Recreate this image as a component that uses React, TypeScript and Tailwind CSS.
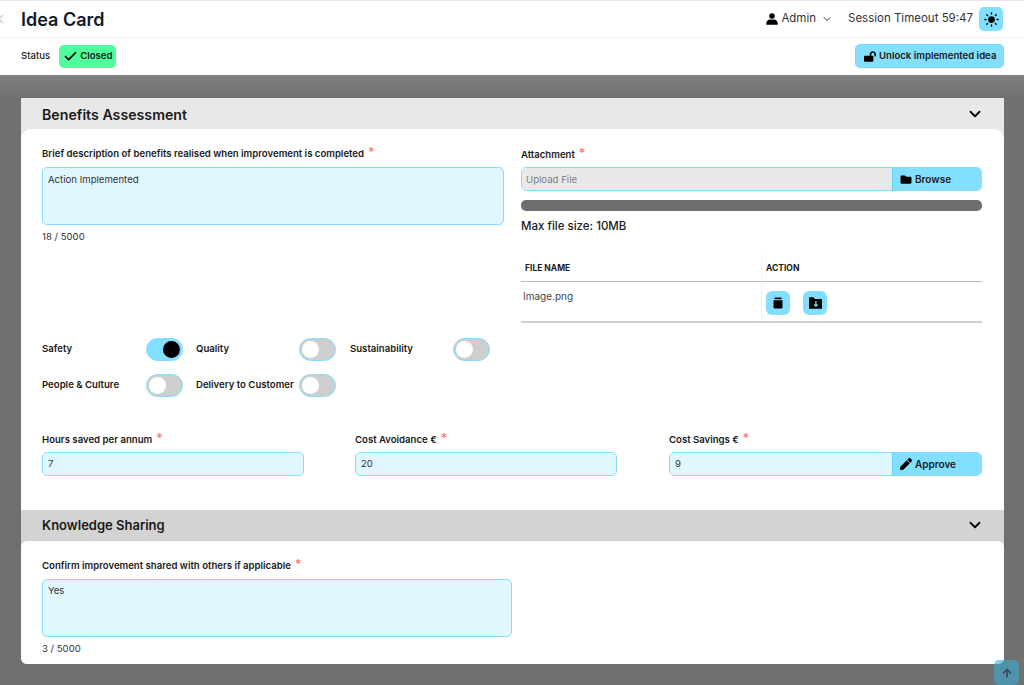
import React from "react";
import { FaFolder, FaPen, FaLockOpen, FaArrowUp } from "react-icons/fa";
import { LuChevronDown, LuX, LuCheck } from "react-icons/lu";

const Req = () => <span className="ml-[4px] text-[#ff7a66] text-[12px] relative -top-[2px]">*</span>;

function Label({ children, cls = "" }: { children: React.ReactNode; cls?: string }) {
  return <div className={"flex items-center h-4 text-[9.6px] font-semibold text-[#1a1a1a] " + cls}>{children}<Req /></div>;
}

function Toggle({ on = false }: { on?: boolean }) {
  return (
    <div className={"w-[37px] h-[23px] rounded-full border border-[#82dfff] flex items-center px-[2px] shrink-0 " + (on ? "bg-[#82dfff] justify-end" : "bg-[#cdcfcf] justify-start")}>
      <div className={"w-[17px] h-[17px] rounded-full " + (on ? "bg-black" : "bg-white")} />
    </div>
  );
}

function ToggleItem({ label, on, w }: { label: string; on?: boolean; w: string }) {
  return (
    <div className={"flex items-center justify-between " + w}>
      <span className="text-[9.6px] font-semibold text-[#1a1a1a]">{label}</span>
      <Toggle on={on} />
    </div>
  );
}

function SectionHead({ title, bg, size }: { title: string; bg: string; size: string }) {
  return (
    <div className={"flex items-center justify-between pl-[21px] pr-[20px] " + bg}>
      <span className={size + " font-semibold text-[#1a1a1a]"}>{title}</span>
      <LuChevronDown className="w-[18px] h-[18px] text-black -mt-[1px]" strokeWidth={2.4} />
    </div>
  );
}

function SunIcon() {
  return (
    <svg viewBox="0 0 16 16" className="w-[15px] h-[15px]" fill="black" stroke="black">
      <circle cx="8" cy="8" r="3.6" stroke="none" />
      <g strokeWidth="1.5" strokeLinecap="round">
        <path d="M8 .9v1.2M8 13.9v1.2M.9 8h1.2M13.9 8h1.2M3 3l.8.8M12.2 12.2l.8.8M3 13l.8-.8M12.2 3.8l.8-.8" />
      </g>
    </svg>
  );
}

function UserIcon() {
  return (
    <svg viewBox="0 0 12 12" className="w-[12px] h-[12px]" fill="black">
      <circle cx="6" cy="3" r="2.8" />
      <path d="M.2 11.2C.2 8.4 2 6.6 3.8 6.6h4.4c1.800 0 3.600 1.800 3.600 4.600 0 .4-.3.6-.6.6H.8c-.3 0-.6-.2-.6-.6z" />
    </svg>
  );
}

function TrashIcon() {
  return (
    <svg viewBox="0 0 12 14" className="w-[10px] h-[12px]" fill="black">
      <rect x="1.5" y="0.4" width="9" height="2" rx="1" />
      <path d="M.6 3.6h10.8v8.4c0 1-.8 1.7-1.8 1.7H2.400c-1 0-1.800-.7-1.800-1.700z" />
    </svg>
  );
}

function FolderDown() {
  return (
    <svg viewBox="0 0 16 14" className="w-[13px] h-[12px]">
      <path fill="black" d="M0 1.2C0 .5.5 0 1.2 0h4.3l1.7 2h7.6c.7 0 1.2.5 1.2 1.2v9.6c0 .7-.5 1.2-1.2 1.2H1.2C.5 14 0 13.500 0 12.800z" />
      <path stroke="#82dfff" strokeWidth="1.5" fill="none" d="M8.500 4.500v6.500M6.300 8.800l2.200 2.200 2.200-2.200" />
    </svg>
  );
}

const textBox = "bg-[#e0f7ff] border border-[#82dfff] rounded-[5px] text-[9.6px] text-[#333] px-[5px]";

export default function App() {
  return (
    <div className="relative w-[1024px] h-[685px] overflow-hidden flex flex-col bg-[#707070] font-['Inter',sans-serif]">
      <header className="h-[38px] shrink-0 bg-white border-t border-t-[#e8e8e8] border-b border-b-[#f2f2f2] flex items-center">
        <LuX className="w-[14px] h-[14px] text-[#c4c4c4] -ml-[8px] shrink-0" />
        <h1 className="ml-[15px] text-[18px] font-semibold text-[#111827]">Idea Card</h1>
        <div className="ml-auto flex items-center pr-[21px]">
          <UserIcon />
          <span className="ml-[3px] text-[11.5px] text-[#333]">Admin</span>
          <LuChevronDown className="ml-[5px] w-[12px] h-[12px] text-[#333]" />
          <span className="ml-[15px] text-[11.5px] text-[#333]">Session Timeout 59:47</span>
          <div className="ml-[6px] w-[24px] h-[24px] rounded-[5px] bg-[#82dfff] flex items-center justify-center">
            <SunIcon />
          </div>
        </div>
      </header>
      <div className="h-[37px] shrink-0 bg-white flex items-center pl-[21px] pr-[20px] pb-[1px]">
        <span className="text-[9.6px] font-medium text-[#1a1a1a]">Status</span>
        <div className="ml-[9px] h-[23px] w-[57px] rounded-[5px] bg-[#4fff9c] flex items-center pl-[4px] gap-[2px]">
          <LuCheck className="w-[15px] h-[15px] text-black shrink-0" strokeWidth={2.8} />
          <span className="text-[9.6px] font-semibold text-[#1a1a1a]">Closed</span>
        </div>
        <div className="ml-auto h-[24px] w-[149px] rounded-[5px] bg-[#82dfff] border border-[#6fd8fb] flex items-center pl-[8px] gap-[3px]">
          <FaLockOpen className="w-[12px] h-[11px] text-black shrink-0" />
          <span className="text-[9.6px] font-semibold text-[#1a1a1a] whitespace-nowrap">Unlock implemented idea</span>
        </div>
      </div>
      <main className="flex-1 bg-gradient-to-b from-[#808080] to-[#707070] bg-[length:100%_24px] bg-no-repeat pt-[23px] pl-[21px] pr-[20px]">
        <SectionHead title="Benefits Assessment" size="text-[14.2px] pt-[1px]" bg="bg-[#e8e8e8] h-[32px]" />
        <section className="-mt-[1px] bg-[#e8e8e8]">
          <div className="bg-white rounded-t-[10px] h-[381px] px-[21px] pt-[17px] flex flex-col">
            <div className="flex h-[189px]">
              <div className="w-[462px] shrink-0">
                <Label>Brief description of benefits realised when improvement is completed</Label>
                <div className={textBox + " mt-[5px] h-[58px] pt-[5px]"}>Action Implemented</div>
                <div className="mt-[5px] text-[9.6px] text-[#333]">18 / 5000</div>
              </div>
              <div className="ml-[17px] w-[461px] shrink-0 pt-[1px]">
                <Label>Attachment</Label>
                <div className="mt-[4px] flex h-[24px] rounded-[5px] border border-[#82dfff] overflow-hidden">
                  <div className="flex-1 bg-[#e8e8e8] text-[9.6px] text-[#808080] flex items-center pl-[4px] pt-[2px]">Upload File</div>
                  <div className="w-[89px] bg-[#82dfff] border-l border-[#5fd3fa] flex items-center pl-[7px] gap-[3px]">
                    <FaFolder className="w-[12px] h-[11px] text-black" />
                    <span className="text-[10px] font-semibold text-[#1a1a1a]">Browse</span>
                  </div>
                </div>
                <div className="mt-[9px] h-[11px] rounded-[5px] bg-[#6e6e6e]" />
                <div className="mt-[8px] text-[11.5px] leading-[15px] font-medium text-[#1a1a1a]">Max file size: 10MB</div>
                <div className="mt-[20px] grid grid-cols-[241px_1fr] border-b-2 border-[#d0d0d0]">
                  <div className="h-[28px] pt-[1px] border-b border-[#bbb] border-r border-r-[#f0f0f0] flex items-center pl-[4px] text-[8.5px] font-bold text-[#1a1a1a]">FILE NAME</div>
                  <div className="h-[28px] pt-[1px] border-b border-[#bbb] flex items-center pl-[4px] text-[8.5px] font-bold text-[#1a1a1a]">ACTION</div>
                  <div className="h-[39px] border-r border-r-[#f0f0f0] pt-[7px] pl-[2px] text-[10px] text-[#444]">Image.png</div>
                  <div className="h-[39px] pt-[9px] pl-[4px] flex gap-[13px]">
                    <div className="w-[24px] h-[24px] rounded-[6px] bg-[#82dfff] flex items-center justify-center"><TrashIcon /></div>
                    <div className="w-[24px] h-[24px] rounded-[6px] bg-[#82dfff] flex items-center justify-center"><FolderDown /></div>
                  </div>
                </div>
              </div>
            </div>
            <div className="mt-[3px] flex gap-[13px]">
              <ToggleItem label="Safety" on w="w-[141px]" />
              <ToggleItem label="Quality" w="w-[140px]" />
              <ToggleItem label="Sustainability" w="w-[140px] ml-[1px]" />
            </div>
            <div className="mt-[13px] flex gap-[13px]">
              <ToggleItem label="People & Culture" w="w-[141px]" />
              <ToggleItem label="Delivery to Customer" w="w-[140px]" />
            </div>
            <div className="mt-[35px] flex">
              <div className="w-[262px]">
                <Label>Hours saved per annum</Label>
                <div className={textBox + " mt-[4px] h-[24px] flex items-center"}>7</div>
              </div>
              <div className="ml-[51px] w-[262px]">
                <Label>Cost Avoidance €</Label>
                <div className={textBox + " mt-[4px] h-[24px] flex items-center"}>20</div>
              </div>
              <div className="ml-[52px] w-[313px]">
                <Label>Cost Savings €</Label>
                <div className="mt-[4px] flex h-[24px] rounded-[5px] border border-[#82dfff] overflow-hidden">
                  <div className="flex-1 bg-[#e0f7ff] text-[9.6px] text-[#333] flex items-center px-[5px]">9</div>
                  <div className="w-[89px] bg-[#82dfff] border-l border-[#5fd3fa] flex items-center pl-[7px] gap-[3px]">
                    <FaPen className="w-[12px] h-[12px] text-black" />
                    <span className="text-[10px] font-semibold text-[#1a1a1a]">Approve</span>
                  </div>
                </div>
              </div>
            </div>
          </div>
        </section>
        <SectionHead title="Knowledge Sharing" size="text-[13px]" bg="bg-[#d3d3d3] h-[31px]" />
        <section className="bg-[#d3d3d3] rounded-b-[6px]">
          <div className="bg-white rounded-[6px] h-[123px] px-[21px] pt-[17px]">
            <Label>Confirm improvement shared with others if applicable</Label>
            <div className={textBox + " mt-[5px] w-[470px] h-[58px] pt-[4px]"}>Yes</div>
            <div className="mt-[5px] text-[9.6px] text-[#333]">3 / 5000</div>
          </div>
        </section>
      </main>
      <div className="absolute left-[994px] top-[660px] w-[25px] h-[25px] rounded-[5px] bg-[#38aad0]/60 flex items-center justify-center">
        <FaArrowUp className="w-[10px] h-[10px] text-[#33474f]" />
      </div>
    </div>
  );
}
